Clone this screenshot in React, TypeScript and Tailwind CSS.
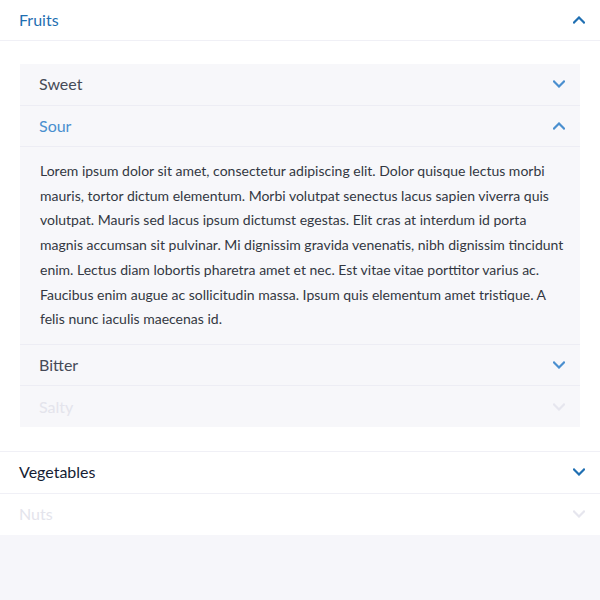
const LOREM =
  'Lorem ipsum dolor sit amet, consectetur adipiscing elit. Dolor quisque lectus morbi mauris, tortor dictum elementum. Morbi volutpat senectus lacus sapien viverra quis volutpat. Mauris sed lacus ipsum dictumst egestas. Elit cras at interdum id porta magnis accumsan sit pulvinar. Mi dignissim gravida venenatis, nibh dignissim tincidunt enim. Lectus diam lobortis pharetra amet et nec. Est vitae vitae porttitor varius ac. Faucibus enim augue ac sollicitudin massa. Ipsum quis elementum amet tristique. A felis nunc iaculis maecenas id.';

function Chevron({ up, color }: { up?: boolean; color: string }) {
  return (
    <svg width="12" height="8" viewBox="0 0 12 8" fill="none">
      <polyline
        points={up ? '1,6.5 6,1.5 11,6.5' : '1,1.5 6,6.5 11,1.5'}
        stroke={color}
        strokeWidth="2.2"
        strokeLinecap="square"
      />
    </svg>
  );
}

type Inner = { label: string; state: 'closed' | 'open' | 'disabled' };

const inner: Inner[] = [
  { label: 'Sweet', state: 'closed' },
  { label: 'Sour', state: 'open' },
  { label: 'Bitter', state: 'closed' },
  { label: 'Salty', state: 'disabled' },
];

export default function App() {
  return (
    <div className="min-h-[600px] bg-[#f6f6fa]" style={{ fontFamily: 'Lato, "Open Sans", sans-serif' }}>
      <div className="bg-white">
        {/* Fruits */}
        <div className="border-b border-[#f0f0f6]">
          <div className="h-[41px] flex items-center justify-between pl-[19px] pr-[15px] border-b border-[#f0f0f6]">
            <span className="text-[16px] text-[#1f6fb2]">Fruits</span>
            <Chevron up color="#1f6fb2" />
          </div>
          <div className="px-5 pt-[23px] pb-6">
            <div className="bg-[#f7f7fa]">
              {inner.map((it, i) => (
                <div key={it.label} className={i < inner.length - 1 ? 'border-b border-[#ededf4]' : ''}>
                  <div className="h-[40.5px] flex items-center justify-between pl-[19px] pr-[15px]">
                    <span
                      className={
                        'text-[16px] ' +
                        (it.state === 'open'
                          ? 'text-[#4a8fcf]'
                          : it.state === 'disabled'
                          ? 'text-[#e4e4ec]'
                          : 'text-[#454a57]')
                      }
                    >
                      {it.label}
                    </span>
                    <Chevron
                      up={it.state === 'open'}
                      color={it.state === 'disabled' ? '#e6e6ee' : '#4a8fcf'}
                    />
                  </div>
                  {it.state === 'open' && (
                    <div className="border-t border-[#ededf4] pl-5 pr-3 py-3">
                      <p className="text-[14px] leading-[24.7px] text-[#333742]">{LOREM}</p>
                    </div>
                  )}
                </div>
              ))}
            </div>
          </div>
        </div>

        {/* Vegetables */}
        <div className="h-[42px] flex items-center justify-between pl-[19px] pr-[15px] border-b border-[#f0f0f6]">
          <span className="text-[16px] text-[#161d33]">Vegetables</span>
          <Chevron color="#1f6fb2" />
        </div>

        {/* Nuts */}
        <div className="h-[41px] flex items-center justify-between pl-[19px] pr-[15px]">
          <span className="text-[16px] text-[#e4e4ec]">Nuts</span>
          <Chevron color="#e6e6ee" />
        </div>
      </div>
    </div>
  );
}
